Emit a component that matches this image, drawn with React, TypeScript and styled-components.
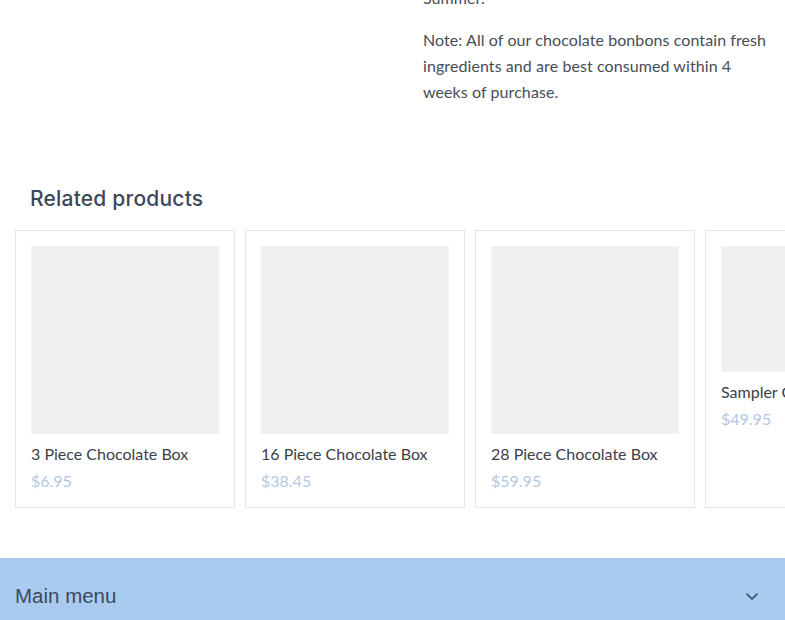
import styled, {createGlobalStyle} from 'styled-components';

const GlobalStyle = createGlobalStyle`
  html, body {
    margin: 0;
    padding: 0;
    background: #ffffff;
    overflow: hidden;
  }
  body {
    font-family: Lato, 'Open Sans', sans-serif;
    color: #4b5159;
  }
`;

interface Product {
  title: string;
  price: string;
  ratio: number;
}

const products: Product[] = [
  {title: '3 Piece Chocolate Box', price: '$6.95', ratio: 1},
  {title: '16 Piece Chocolate Box', price: '$38.45', ratio: 1},
  {title: '28 Piece Chocolate Box', price: '$59.95', ratio: 1},
  {title: 'Sampler Chocolate Box', price: '$49.95', ratio: 126 / 188},
];

export default function App() {
  return (
    <>
      <GlobalStyle />
      <Page>
        <Description>
          <div />
          <Copy>
            <p>Summer.</p>
            <p>
              Note: All of our chocolate bonbons contain fresh ingredients and
              are best consumed within 4 weeks of purchase.
            </p>
          </Copy>
        </Description>

        <Related>
          <Heading>Related products</Heading>
          <Track>
            {products.map((p) => (
              <Card key={p.title}>
                <Thumb $ratio={p.ratio} />
                <Title>{p.title}</Title>
                <Price>{p.price}</Price>
              </Card>
            ))}
          </Track>
        </Related>

        <MenuBar>
          <span>Main menu</span>
          <svg width="14" height="9" viewBox="0 0 14 9" fill="none">
            <path
              d="M1.5 1.5L7 7L12.5 1.5"
              stroke="#3d4c5e"
              strokeWidth="1.6"
            />
          </svg>
        </MenuBar>
      </Page>
    </>
  );
}

const Page = styled.div`
  width: 785px;
  margin-top: -15px;
`;

const Description = styled.section`
  display: grid;
  grid-template-columns: 423px 1fr;
  padding-right: 15px;
`;

const Copy = styled.div`
  font-size: 16px;
  line-height: 26px;
  letter-spacing: 0.08px;
  color: #474d55;

  p {
    margin: 0 0 16px;
  }
`;

const Related = styled.section`
  margin-top: 63px;
`;

const Heading = styled.h2`
  margin: 0 0 16px 30px;
  font-family: Inter, 'Open Sans', sans-serif;
  font-weight: 500;
  font-size: 21px;
  line-height: 30px;
  color: #3c4857;
  letter-spacing: 0.2px;
`;

const Track = styled.div`
  display: flex;
  gap: 10px;
  padding-left: 15px;
  overflow: hidden;
`;

const Card = styled.div`
  flex: 0 0 220px;
  box-sizing: border-box;
  height: 278px;
  padding: 15px;
  border: 1px solid #e4e6e9;
`;

const Thumb = styled.div<{$ratio: number}>`
  width: 188px;
  height: ${(p) => Math.round(188 * p.$ratio)}px;
  background: #eff0f2;
`;

const Title = styled.div`
  margin-top: 7px;
  font-size: 16px;
  line-height: 26px;
  color: #3a4048;
  white-space: nowrap;
`;

const Price = styled.div`
  margin-top: 1px;
  font-size: 16px;
  line-height: 26px;
  color: #b3c8e4;
`;

const MenuBar = styled.div`
  margin-top: 50px;
  height: 76px;
  box-sizing: border-box;
  display: flex;
  align-items: flex-start;
  justify-content: space-between;
  padding: 25px 26px 0 15px;
  background: #aacbf0;
  font-family: 'Liberation Sans', Arial, sans-serif;
  font-size: 20.5px;
  line-height: 26px;
  color: #3b4a5c;

  svg {
    margin-top: 9px;
  }
`;
